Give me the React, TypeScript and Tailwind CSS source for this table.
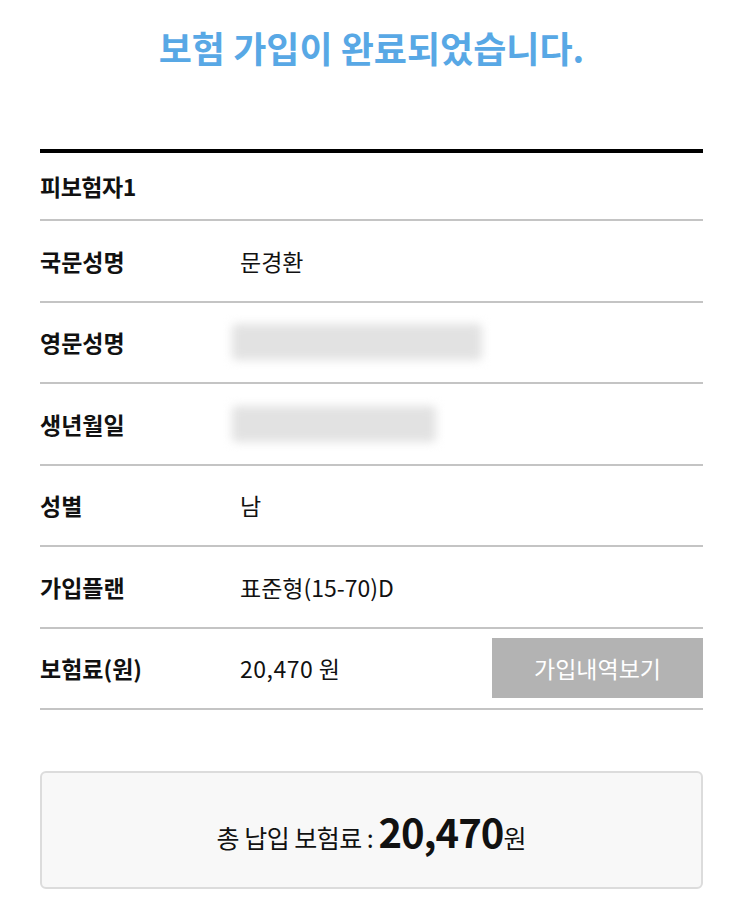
const rows: { label: string; value?: string; blur?: number }[] = [
    { label: '국문성명', value: '문경환' },
    { label: '영문성명', blur: 250 },
    { label: '생년월일', blur: 204 },
    { label: '성별', value: '남' },
    { label: '가입플랜', value: '표준형(15-70)D' },
];

const font = { fontFamily: '"Noto Sans CJK KR", "Noto Sans", sans-serif' };

const App = () => {
    return (
        <div className="w-[743px] h-[910px] bg-white overflow-hidden" style={font}>
            <h1 className="pt-[20px] text-center text-[36px] font-bold leading-[54px] text-[#58a8e5]">
                보험 가입이 완료되었습니다.
            </h1>

            <div className="mx-[40px] mt-[75px] border-t-[4px] border-black">
                <div className="h-[68px] flex items-center border-b-2 border-[#c4c4c4]">
                    <span className="text-[23px] font-bold text-[#111] tracking-[-0.5px]">피보험자1</span>
                </div>

                {rows.map(row => (
                    <div key={row.label} className="h-[81.5px] flex items-center border-b-2 border-[#c4c4c4]">
                        <span className="w-[200px] text-[23px] font-bold text-[#111]">{row.label}</span>
                        {row.value && <span className="text-[23px] text-[#111]">{row.value}</span>}
                        {row.blur && (
                            <div className="-ml-[8px] h-[36px] bg-[#e2e2e2] blur-[5px] rounded" style={{ width: row.blur }} />
                        )}
                    </div>
                ))}

                {/* 보험료 row + button */}
                <div className="h-[81.5px] flex items-center border-b-2 border-[#c4c4c4]">
                    <span className="w-[200px] text-[23px] font-bold text-[#111]">보험료(원)</span>
                    <span className="flex-1 text-[23px] text-[#111] tracking-[0.5px]">20,470 원</span>
                    <button className="w-[211px] h-[60px] bg-[#b3b3b3] text-white text-[23px]">
                        가입내역보기
                    </button>
                </div>
            </div>

            <div className="mx-[40px] mt-[61px] h-[118px] bg-[#f8f8f8] border-2 border-[#dcdcdc] rounded-[6px] flex items-center justify-center">
                <p className="flex items-baseline text-[#111] pt-[2px]">
                    <span className="text-[25px] tracking-[-0.5px]">총 납입 보험료 :&nbsp;</span>
                    <span className="text-[40px] font-bold tracking-[-1px]">20,470</span>
                    <span className="text-[25px]">원</span>
                </p>
            </div>
        </div>
    );
};

export default App;
